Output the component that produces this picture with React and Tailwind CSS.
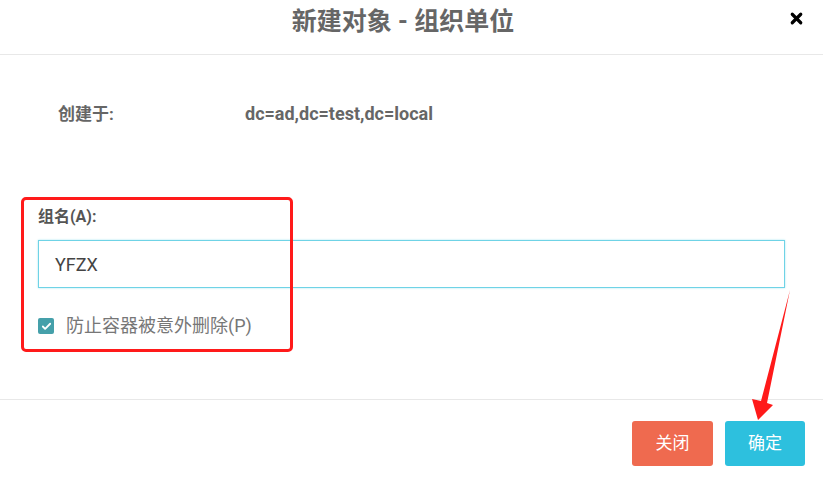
import { Check, X } from 'lucide-react';

const FONT = { fontFamily: 'Roboto, "Noto Sans CJK SC", "Liberation Sans", sans-serif' };

export default function App() {
  return (
    <div className="relative h-[484px] w-[823px] overflow-hidden bg-white text-[#666]" style={FONT}>
      {/* header */}
      <div className="flex h-[55px] items-start justify-center border-b border-[#e8e8e8] pr-[17px] pt-[6px]">
        <h1 className="text-[25px] leading-8 font-bold text-[#666]">新建对象 - 组织单位</h1>
        <X className="absolute right-[18px] top-[10px] h-[17px] w-[17px] text-black" strokeWidth={4.5} />
      </div>

      {/* body */}
      <div className="h-[344px] px-[38px]">
        <div className="flex items-center pt-[47px] leading-6 font-bold text-[#666]">
          <span className="w-[207px] pl-[20px] text-[17px]">创建于:</span>
          <span className="text-[18px]">dc=ad,dc=test,dc=local</span>
        </div>

        <div className="pt-[79px] text-[16px] leading-6 font-bold text-[#555]">组名(A):</div>
        <div className="mt-[11px] flex h-[48px] w-[747px] items-center border border-[#6fd3e6] pl-[16px] text-[18px] text-[#444] shadow-[0_0_2px_#a9e6f1]">
          YFZX
        </div>
        <label className="mt-[26px] flex items-center gap-[12px] text-[18px] leading-6 text-[#777]">
          <span className="flex h-[16px] w-[16px] items-center justify-center rounded-[2px] bg-[#45a0aa]">
            <Check className="h-[11px] w-[11px] text-white" strokeWidth={4} />
          </span>
          防止容器被意外删除(P)
        </label>
      </div>

      {/* footer */}
      <div className="flex h-[85px] justify-end gap-[12px] border-t border-[#e8e8e8] pr-[18px] pt-[21px]">
        <button type="button" className="h-[45px] w-[81px] rounded-[3px] bg-[#ef6a4f] text-[17px] text-white">
          关闭
        </button>
        <button type="button" className="h-[45px] w-[80px] rounded-[3px] bg-[#2dc0de] text-[17px] text-white">
          确定
        </button>
      </div>

      {/* red annotation box */}
      <div className="pointer-events-none absolute left-[21px] top-[197px] h-[155px] w-[272px] rounded-[5px] border-[3px] border-[#ff1a1a]" />

      {/* red annotation arrow */}
      <svg className="pointer-events-none absolute left-0 top-0" width="823" height="484">
        <polygon
          points="790,290 767,403 773,405 758,420 752,399 761,401"
          fill="#ff1a1a"
        />
      </svg>
    </div>
  );
}
